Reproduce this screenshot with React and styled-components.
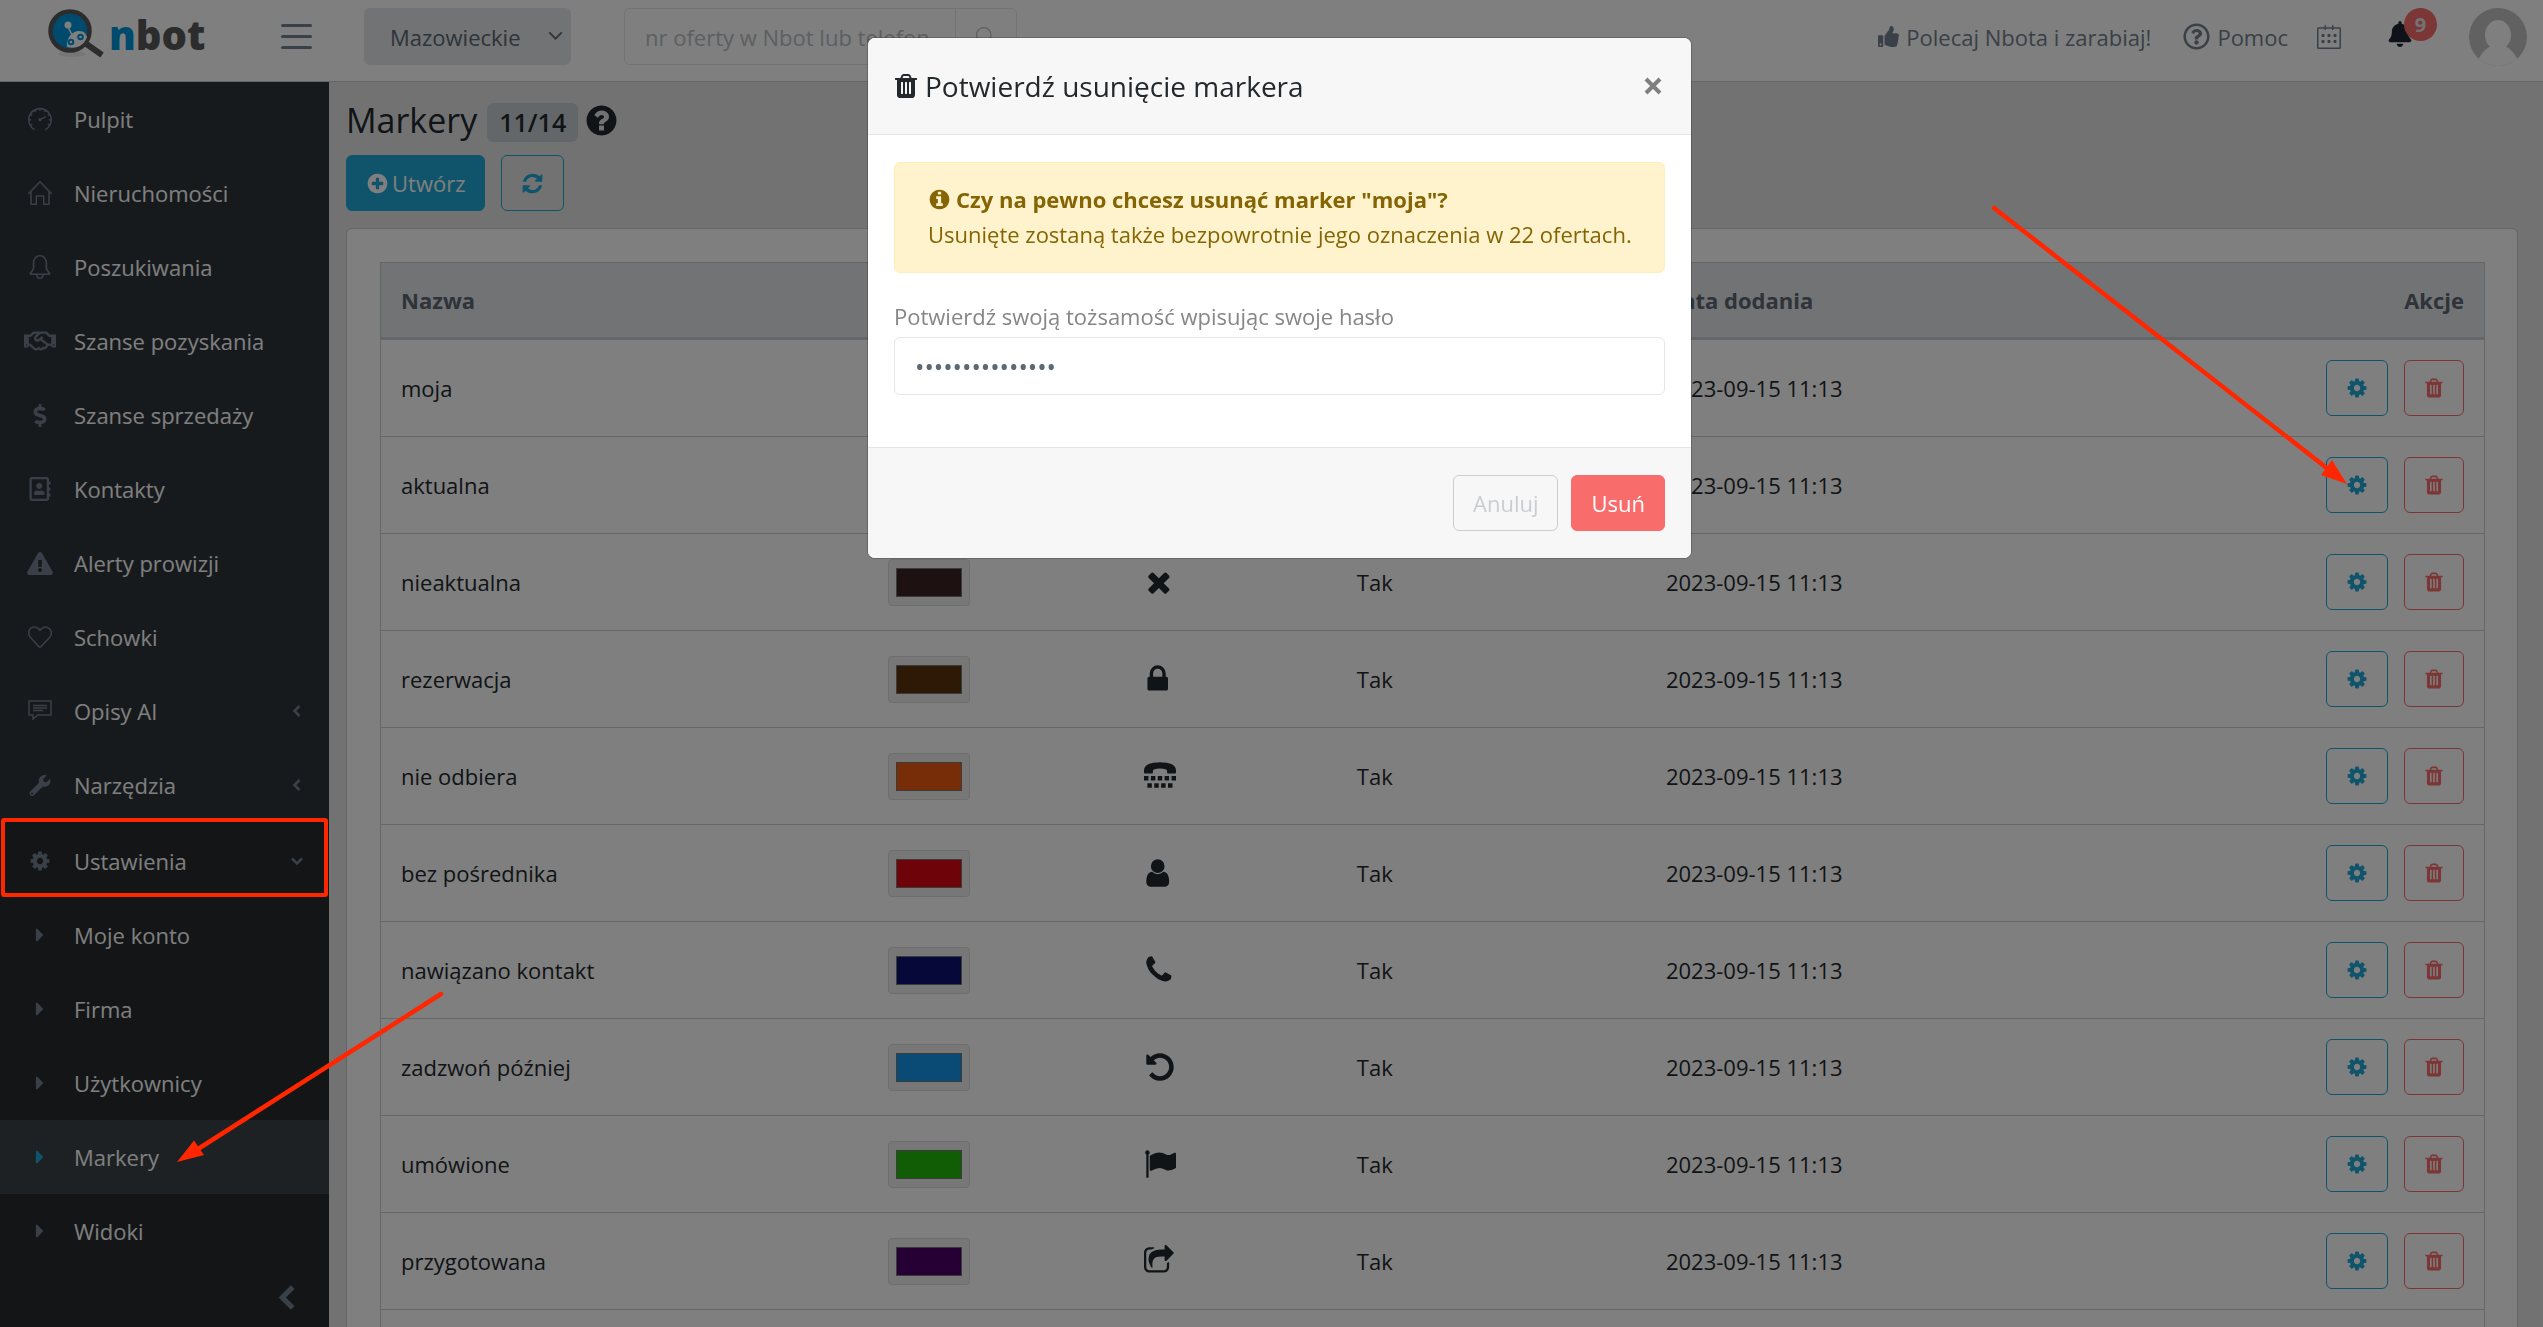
import React from "react";
import styled, { createGlobalStyle } from "styled-components";
import { SlSpeedometer, SlHome, SlBell, SlCalender, SlHeart, SlMagnifier } from "react-icons/sl";
import {
  FaRegHandshake, FaDollarSign, FaRegAddressBook, FaExclamationTriangle, FaWrench,
  FaCaretRight, FaThumbsUp, FaRegQuestionCircle, FaBell,
} from "react-icons/fa";

const c = {
  ink: "#23282c", muted: "#5c6873", icon: "#73818f", line: "#c8ced3",
  blue: "#20a8d8", red: "#f86c6b", side: "#2f353a", mark: "#ff2600",
};

const Global = createGlobalStyle`
  *, *::before, *::after { box-sizing: border-box; }
  body { margin: 0; background: #e4e5e6; color: ${c.ink}; }
  body, button, input, select { font-family: "Open Sans", "Noto Sans", sans-serif; font-size: 22px; line-height: 34px; }
  a { color: inherit; text-decoration: none; }
  h1, h2, p { margin: 0; font-weight: 400; }
`;

/* ---------- icons ---------- */
const CIRCLE = "M1664 896q0 209-103 385.5t-279.5 279.5-385.5 103-385.5-103-279.5-279.5-103-385.5 103-385.5 279.5-279.5 385.5-103 385.5 103 279.5 279.5 103 385.5z";
const PATHS = {
  cog: "M1152 896q0-106-75-181t-181-75-181 75-75 181 75 181 181 75 181-75 75-181zm512-109v222q0 12-8 23t-20 13l-185 28q-19 54-39 91 35 50 107 138 10 12 10 25t-9 23q-27 37-99 108t-94 71q-12 0-26-9l-138-108q-44 23-91 38-16 136-29 186-7 28-36 28h-222q-14 0-24.5-8.5t-11.5-21.5l-28-184q-49-16-90-37l-141 107q-10 9-25 9-14 0-25-11-126-114-165-168-7-10-7-23 0-12 8-23 15-21 51-66.5t54-70.5q-27-50-41-99l-183-27q-13-2-21-12.5t-8-23.5v-222q0-12 8-23t19-13l186-28q14-46 39-92-40-57-107-138-10-12-10-24 0-10 9-23 26-36 98.5-107.5t94.5-71.5q13 0 26 10l138 107q44-23 91-38 16-136 29-186 7-28 36-28h222q14 0 24.5 8.5t11.5 21.5l28 184q49 16 90 37l142-107q9-9 24-9 13 0 25 10 129 119 165 170 7 8 7 22 0 12-8 23-15 21-51 66.5t-54 70.5q26 50 41 98l183 28q13 2 21 12.5t8 23.5z",
  trash: "M704 1376v-704q0-14-9-23t-23-9h-64q-14 0-23 9t-9 23v704q0 14 9 23t23 9h64q14 0 23-9t9-23zm256 0v-704q0-14-9-23t-23-9h-64q-14 0-23 9t-9 23v704q0 14 9 23t23 9h64q14 0 23-9t9-23zm256 0v-704q0-14-9-23t-23-9h-64q-14 0-23 9t-9 23v704q0 14 9 23t23 9h64q14 0 23-9t9-23zm-544-992h448l-48-117q-7-9-17-11h-317q-10 2-17 11zm928 32v64q0 14-9 23t-23 9h-96v948q0 83-47 143.5t-113 60.5h-832q-66 0-113-58.5t-47-141.5v-952h-96q-14 0-23-9t-9-23v-64q0-14 9-23t23-9h309l70-167q15-37 54-63t79-26h320q40 0 79 26t54 63l70 167h309q14 0 23 9t9 23z",
  refresh: "M1639 1056q0 5-1 7-64 268-268 434.5t-478 166.5q-146 0-282.5-55t-243.5-157l-129 129q-19 19-45 19t-45-19-19-45v-448q0-26 19-45t45-19h448q26 0 45 19t19 45-19 45l-137 137q71 66 161 102t187 36q134 0 250-65t186-179q11-17 53-117 8-23 30-23h192q13 0 22.5 9.5t9.5 22.5zm25-800v448q0 26-19 45t-45 19h-448q-26 0-45-19t-19-45 19-45l138-138q-148-137-349-137-134 0-250 65t-186 179q-11 17-53 117-8 23-30 23h-199q-13 0-22.5-9.5t-9.5-22.5v-7q65-268 270-434.5t480-166.5q146 0 284 55.5t245 156.5l130-129q19-19 45-19t45 19 19 45z",
  plus: "M1344 960v-128q0-26-19-45t-45-19h-256v-256q0-26-19-45t-45-19h-128q-26 0-45 19t-19 45v256h-256q-26 0-45 19t-19 45v128q0 26 19 45t45 19h256v256q0 26 19 45t45 19h128q26 0 45-19t19-45v-256h256q26 0 45-19t19-45z" + CIRCLE,
  question: "M1024 1376v-192q0-14-9-23t-23-9h-192q-14 0-23 9t-9 23v192q0 14 9 23t23 9h192q14 0 23-9t9-23zm256-672q0-88-55.5-163t-138.5-116-170-41q-243 0-371 213-15 24 8 42l132 100q7 6 19 6 16 0 25-12 53-68 86-92 34-24 86-24 48 0 85.5 26t37.5 59q0 38-20 61t-68 45q-63 28-115.5 86.5t-52.5 125.5v36q0 14 9 23t23 9h192q14 0 23-9t9-23q0-19 21.5-49.5t54.5-49.5q32-18 49-28.5t46-35 44.5-48 28-60.5 12.5-81z" + CIRCLE,
  info: "M1152 1376v-160q0-14-9-23t-23-9h-96v-512q0-14-9-23t-23-9h-320q-14 0-23 9t-9 23v160q0 14 9 23t23 9h96v320h-96q-14 0-23 9t-9 23v160q0 14 9 23t23 9h448q14 0 23-9t9-23zm-128-896v-160q0-14-9-23t-23-9h-192q-14 0-23 9t-9 23v160q0 14 9 23t23 9h192q14 0 23-9t9-23z" + CIRCLE,
  times: "M1426 1322q0 40-28 68l-136 136q-28 28-68 28t-68-28l-294-294-294 294q-28 28-68 28t-68-28l-136-136q-28-28-28-68t28-68l294-294-294-294q-28-28-28-68t28-68l136-136q28-28 68-28t68 28l294 294 294-294q28-28 68-28t68 28l136 136q28 28 28 68t-28 68l-294 294 294 294q28 28 28 68z",
  lock: "M512 768h512v-192q0-106-75-181t-181-75-181 75-75 181v192zm832 96v576q0 40-28 68t-68 28h-960q-40 0-68-28t-28-68v-576q0-40 28-68t68-28h32v-192q0-184 132-316t316-132 316 132 132 316v192h32q40 0 68 28t28 68z",
  user: "M1408 1399q0 109-62.5 187t-150.5 78h-854q-88 0-150.5-78t-62.5-187q0-85 8.5-160.5t31.5-152 58.5-131 94-89 134.5-34.5q131 128 313 128t313-128q76 0 134.5 34.5t94 89 58.5 131 31.5 152 8.5 160.5zm-256-887q0 159-112.5 271.5t-271.5 112.5-271.5-112.5-112.5-271.5 112.5-271.5 271.5-112.5 271.5 112.5 112.5 271.5z",
  phone: "M1536 1240q0 27-10 70.5t-21 68.5q-21 50-122 106-94 51-186 51-27 0-52.5-3.5t-57.5-12.5-47.5-14.5-55.5-20.5-49-18q-98-35-175-83-128-79-264.5-215.5t-215.5-264.5q-48-77-83-175-3-9-18-49t-20.5-55.5-14.5-47.5-12.5-57.5-3.5-52.5q0-92 51-186 56-101 106-122 25-11 68.5-21t70.5-10q14 0 21 3 18 6 53 76 11 19 30 54t35 63.5 31 53.5q3 4 17.5 25t21.5 35.5 7 28.5q0 20-28.5 50t-62 55-62 53-28.5 46q0 9 5 22.5t8.5 20.5 14 24 11.5 19q76 137 174 235t235 174q2 1 19 11.5t24 14 20.5 8.5 22.5 5q18 0 46-28.5t53-62 55-62 50-28.5q14 0 28.5 7t35.5 21.5 25 17.5q25 15 53.5 31t63.5 35 54 30q70 35 76 53 3 7 3 21z",
  undo: "M1664 896q0 156-61 298t-164 245-245 164-298 61q-172 0-327-72.5t-264-204.5q-7-10-6.5-22.5t8.5-20.5l137-138q10-9 25-9 16 2 23 12 73 95 179 147t225 52q104 0 198.5-40.5t163.5-109.5 109.5-163.5 40.5-198.5-40.5-198.5-109.5-163.5-163.5-109.5-198.5-40.5q-98 0-188 35.5t-160 101.5l137 138q31 30 14 69-17 40-59 40h-448q-26 0-45-19t-19-45v-448q0-42 40-59 39-17 69 14l130 129q107-101 244.5-156.5t284.5-55.5q156 0 298 61t245 164 164 245 61 298z",
  flag: "M320 256q0 72-64 110v1266q0 13-9.5 22.5t-22.5 9.5h-64q-13 0-22.5-9.5t-9.5-22.5v-1266q-64-38-64-110 0-53 37.5-90.5t90.5-37.5 90.5 37.5 37.5 90.5zm1472 64v763q0 25-12.5 38.5t-39.5 27.5q-215 116-369 116-61 0-123.5-22t-108.5-48-115.5-48-142.5-22q-192 0-464 146-17 9-33 9-26 0-45-19t-19-45v-742q0-32 31-55 21-14 79-43 236-120 421-120 107 0 200 29t219 88q38 19 88 19 54 0 117.5-21t110-47 88-47 54.5-21q26 0 45 19t19 45z",
  share: "M1408 989v259q0 119-84.5 203.5t-203.5 84.5h-832q-119 0-203.5-84.5t-84.5-203.5v-832q0-119 84.5-203.5t203.5-84.5h255q13 0 22.5 9.5t9.5 22.5q0 27-26 32-77 26-133 60-10 4-16 4h-112q-66 0-113 47t-47 113v832q0 66 47 113t113 47h832q66 0 113-47t47-113v-214q0-19 18-29 28-13 54-37 16-16 35-8 21 9 21 29zm237-496l-384 384q-18 19-45 19-12 0-25-5-39-17-39-59v-192h-160q-323 0-438 131-119 137-74 473 3 23-20 34-8 2-12 2-16 0-26-13-10-14-21-31t-39.5-68.5-49.5-99.5-38.5-114-17.5-122q0-49 3.5-91t14-90 28-88 47-81.5 68.5-74 94.5-61.5 124.5-48.5 159.5-30.5 196.5-11h160v-192q0-42 39-59 13-5 25-5 26 0 45 19l384 384q19 19 19 45t-19 45z",
  tty: "M0 576Q20 128 896 128T1792 576V700Q1792 752 1740 752H1344Q1290 752 1290 700V560Q896 400 502 560V700Q502 752 448 752H52Q0 752 0 700ZM0 900h250v250H0zM385 900h250v250H385zM770 900h250v250H770zM1155 900h250v250H1155zM1542 900h250v250H1542zM190 1300h250v250H190zM575 1300h250v250H575zM960 1300h250v250H960zM1345 1300h250v250H1345z",
};
const Glyph = ({ name, size = 22 }) => (
  <svg width={size} height={size} viewBox="0 0 1792 1792" fill="currentColor" aria-hidden="true">
    <path fillRule={name === "tty" ? "nonzero" : "evenodd"} d={PATHS[name]} />
  </svg>
);
const Chevron = ({ size, down, weight = 3 }) => (
  <svg width={size} height={size} viewBox="0 0 12 12" fill="none" stroke="currentColor" strokeWidth={weight} aria-hidden="true">
    <path d={down ? "M1 3.5l5 5 5-5" : "M8.5 1l-5 5 5 5"} />
  </svg>
);
const Comment = () => (
  <svg width="24" height="24" viewBox="0 0 24 24" fill="none" stroke="currentColor" strokeWidth="1.5" aria-hidden="true">
    <path d="M1 2h22v14H10l-5 4v-4H1zM5 6.5h14M5 9h14M5 11.5h10" />
  </svg>
);
const LogoMark = () => (
  <svg width="58" height="52" viewBox="0 -1 58 52" aria-hidden="true">
    <ellipse cx="24" cy="44" rx="14" ry="3" fill="#000" opacity=".07" />
    <path d="M37 33l17 12" stroke="#58595b" strokeWidth="6" />
    <circle cx="22" cy="21" r="19.5" fill="#0095da" stroke="#58595b" strokeWidth="4.5" />
    <path d="M19 37C18 27 25 21 31 21C36 21 38 24 39 27C37 34 29 40 19 37Z" fill="#fff" />
    <circle cx="20" cy="15" r="3.5" fill="#fff" />
    <path d="M20 17l4 8" stroke="#fff" strokeWidth="1.5" />
    <circle cx="23" cy="32" r="2.3" fill="none" stroke="#0095da" strokeWidth="2" />
    <circle cx="32.5" cy="27" r="2.3" fill="none" stroke="#0095da" strokeWidth="2" />
  </svg>
);

/* ---------- top bar ---------- */
const Shell = styled.div`height: 100vh; display: flex; flex-direction: column; overflow: hidden;`;
const Header = styled.header`
  flex: none; height: 82px; padding: 8px 16px 8px 48px; background: #fff; border-bottom: 1px solid ${c.line};
  display: flex; align-items: flex-start; color: ${c.icon};
`;
const Brand = styled.a`
  width: 233px; height: 54px; display: flex; align-items: center; gap: 3px; font-size: 40px; line-height: 50px; font-weight: 800; color: #58595b;
  svg { flex: none; }
  span { color: #0095da; }
`;
const BarButton = styled.button`
  width: 31px; height: 56px; margin-right: 52px; padding: 0; border: 0; background: none;
  display: flex; flex-direction: column; justify-content: center; gap: 8px;
  i { height: 3px; border-radius: 2px; background: ${c.icon}; }
`;
const RegionWrap = styled.div`
  position: relative; color: ${c.muted};
  svg { position: absolute; right: 8px; top: 20px; pointer-events: none; }
`;
const RegionSelect = styled.select`
  width: 207px; height: 57px; padding: 0 26px; border: 0; border-radius: 6px; background: #e4e7ea; color: ${c.muted}; appearance: none;
`;
const Search = styled.form`
  margin-left: 53px; display: flex; height: 57px; border: 1px solid #e4e7ea; border-radius: 6px;
`;
const SearchInput = styled.input`
  width: 330px; padding: 0 20px; border: 0; background: none; color: ${c.muted};
  &::placeholder { color: #b9bec3; opacity: 1; }
`;
const SearchButton = styled.button`
  width: 61px; border: 0; border-left: 1px solid #e4e7ea; background: none; color: #b9bec3; padding: 0;
  svg { display: block; margin: auto; }
`;
const Tools = styled.nav`
  margin-left: auto; display: flex; align-items: center; height: 57px; color: ${c.icon};
`;
const ToolLink = styled.a`
  display: flex; align-items: center; gap: 7px; margin-right: ${p => p.$gap}px;
`;
const Alerts = styled.button`
  position: relative; width: 26px; height: 26px; margin: 0 56px 6px 0; padding: 0; border: 0; background: none; color: #212433;
`;
const Count = styled.span`
  position: absolute; left: 17px; top: -13px; width: 33px; height: 33px; border-radius: 50%;
  background: ${c.red}; color: #e4e7ea; font-size: 20px; line-height: 33px; font-weight: 700; text-align: center;
`;
const Avatar = styled.svg`display: block; border-radius: 50%;`;

/* ---------- sidebar ---------- */
const Body = styled.div`flex: 1; min-height: 0; display: flex;`;
const Sidebar = styled.aside`
  flex: none; width: 329px; background: ${c.side}; color: #fff; display: flex; flex-direction: column;
`;
const NavItem = styled.a`
  height: 74px; padding: 0 26px 0 24px; display: flex; align-items: center; gap: 18px;
  background: ${p => (p.$active ? "#3a4248" : "transparent")};
  > svg { flex: none; width: 32px; color: ${p => (p.$active ? c.blue : c.icon)}; }
  > svg:last-child { width: 12px; margin-left: auto; }
`;
const NavGroup = styled.div`
  flex: 1; display: flex; flex-direction: column; padding-top: 2px; background: #262a2e;
`;
const Minimize = styled.button`
  flex: 1; border: 0; background: none; color: ${c.icon}; padding: 0 29px; display: flex; justify-content: flex-end; align-items: center;
`;

/* ---------- content ---------- */
const Main = styled.main`flex: 1; min-width: 0; padding: 16px 25px 0 17px;`;
const TitleRow = styled.div`display: flex; align-items: center; gap: 6px; height: 44px;`;
const Title = styled.h1`font-size: 34px; line-height: 44px; margin-right: 4px;`;
const Badge = styled.span`
  height: 39px; padding: 0 12px; border-radius: 6px; background: ${c.line}; font-size: 25px; line-height: 39px; font-weight: 600; margin-top: 4px;
`;
const Actions = styled.div`display: flex; gap: 16px; margin: 13px 0 17px;`;
const Button = styled.button`
  height: 56px; padding: 0 ${p => p.$pad || 19}px; border: 1px solid ${p => p.$tone}; border-radius: 6px;
  display: inline-flex; align-items: center; justify-content: center; gap: 3px;
  background: ${p => (p.$solid ? p.$tone : "transparent")}; color: ${p => (p.$solid ? "#fff" : p.$tone)};
`;
const Card = styled.section`padding: 33px 32px 33px 33px; background: #fff; border: 1px solid ${c.line}; border-radius: 6px;`;
const Table = styled.table`
  width: 100%; table-layout: fixed; border-collapse: separate; border-spacing: 0; border: 1px solid ${c.line};
`;
const Th = styled.th`
  height: 77px; padding: 0 20px; text-align: ${p => (p.$right ? "right" : "left")}; font-weight: 700; color: ${c.muted};
  background: #e4e7ea; border-bottom: 3px solid ${c.line};
`;
const Td = styled.td`
  height: 97px; padding: 0 20px; border-bottom: 1px solid ${c.line}; vertical-align: middle;
  > svg { display: block; }
`;
const Swatch = styled.input`
  display: block; width: 82px; height: 47px; padding: 8px 7px; border: 1px solid #dcdcdc; border-radius: 4px; background: #efefef;
  &::-webkit-color-swatch-wrapper { padding: 0; }
  &::-webkit-color-swatch { border: 1px solid #767676; }
`;
const RowActions = styled.div`display: flex; justify-content: flex-end; gap: 16px;`;

/* ---------- dialog ---------- */
const Backdrop = styled.div`
  position: fixed; inset: 0; padding: 38px 0 0 16px; background: rgba(0, 0, 0, .5); display: flex; justify-content: center; align-items: flex-start;
`;
const Dialog = styled.section`
  width: 823px; border-radius: 7px; overflow: hidden; background: #fff; box-shadow: 0 0 0 1px rgba(0, 0, 0, .2);
`;
const DialogHead = styled.header`
  height: 97px; padding: 0 28px 0 24px; background: #f7f7f7; border-bottom: 1px solid #e4e5e6; display: flex; align-items: center; gap: 5px;
`;
const DialogTitle = styled.h2`font-size: 28px; line-height: 40px;`;
const Close = styled.button`
  margin-left: auto; padding: 0; border: 0; background: none; color: #7f7f7f; display: flex;
`;
const DialogBody = styled.div`padding: 27px 26px 52px;`;
const Alert = styled.div`
  height: 111px; padding: 19px 33px; background: #fff3cd; border: 1px solid #ffeeba; border-radius: 6px; color: #856404; line-height: 35px; white-space: nowrap;
  strong { display: flex; align-items: center; gap: 5px; }
`;
const FieldLabel = styled.label`display: block; margin: 26px 0 4px; color: #868686; line-height: 34px;`;
const Password = styled.input`
  display: block; width: 100%; height: 58px; padding: 0 20px; border: 1px solid #e4e7ea; border-radius: 6px; color: ${c.muted}; background: #fff; font-size: 25px;
`;
const DialogFoot = styled.footer`
  height: 111px; padding: 0 26px; background: #f7f7f7; border-top: 1px solid #e4e5e6; display: flex; align-items: center; justify-content: flex-end; gap: 13px;
`;
const Marks = styled.svg`position: fixed; left: 0; top: 0; pointer-events: none;`;

const NAV = [
  ["Pulpit", <SlSpeedometer size={24} />],
  ["Nieruchomości", <SlHome size={24} />],
  ["Poszukiwania", <SlBell size={24} />],
  ["Szanse pozyskania", <FaRegHandshake size={30} />],
  ["Szanse sprzedaży", <FaDollarSign size={23} />],
  ["Kontakty", <FaRegAddressBook size={24} />],
  ["Alerty prowizji", <FaExclamationTriangle size={23} />],
  ["Schowki", <SlHeart size={24} />],
  ["Opisy AI", <Comment />, true],
  ["Narzędzia", <FaWrench size={21} />, true],
];
const SUBNAV = ["Moje konto", "Firma", "Użytkownicy", "Markery", "Widoki"];
const ROWS = [
  ["moja"], ["aktualna"],
  ["nieaktualna", "#3c2324", "times"],
  ["rezerwacja", "#5b320b", "lock"],
  ["nie odbiera", "#f05a13", "tty"],
  ["bez pośrednika", "#df0714", "user"],
  ["nawiązano kontakt", "#0a1172", "phone"],
  ["zadzwoń później", "#1497ea", "undo"],
  ["umówione", "#23bb0a", "flag"],
  ["przygotowana", "#4d0068", "share"],
  [""],
];

export default function App() {
  return (
    <Shell>
      <Global />
      <Header>
        <Brand href="#" aria-label="nbot"><LogoMark /><div><span>n</span>bot</div></Brand>
        <BarButton aria-label="Menu"><i /><i /><i /></BarButton>
        <RegionWrap>
          <RegionSelect aria-label="Województwo"><option>Mazowieckie</option></RegionSelect>
          <Chevron size={15} down weight={1.5} />
        </RegionWrap>
        <Search>
          <SearchInput aria-label="Szukaj" placeholder="nr oferty w Nbot lub telefon" />
          <SearchButton type="button" aria-label="Szukaj"><SlMagnifier size={20} /></SearchButton>
        </Search>
        <Tools>
          <ToolLink href="#" $gap={32}><FaThumbsUp size={21} />Polecaj Nbota i zarabiaj!</ToolLink>
          <ToolLink href="#" $gap={29}><FaRegQuestionCircle size={27} />Pomoc</ToolLink>
          <ToolLink href="#" $gap={46} aria-label="Kalendarz"><SlCalender size={24} /></ToolLink>
          <Alerts aria-label="Powiadomienia"><FaBell size={26} /><Count>9</Count></Alerts>
          <Avatar width="58" height="58" viewBox="0 0 58 58" role="img" aria-label="Profil">
            <rect width="58" height="58" fill="#c2c2c2" />
            <ellipse cx="29" cy="27" rx="13" ry="15" fill="#fff" />
            <path d="M7 58Q12 41 25 37h8Q46 41 51 58z" fill="#fff" />
          </Avatar>
        </Tools>
      </Header>
      <Body>
        <Sidebar>
          {NAV.map(([label, icon, more]) => (
            <NavItem href="#" key={label}>{icon}<span>{label}</span>{more && <Chevron size={12} weight={2.5} />}</NavItem>
          ))}
          <NavGroup>
            <NavItem href="#"><Glyph name="cog" /><span>Ustawienia</span><Chevron size={12} down weight={2.5} /></NavItem>
            {SUBNAV.map(label => (
              <NavItem href="#" key={label} $active={label === "Markery"}><FaCaretRight size={22} /><span>{label}</span></NavItem>
            ))}
            <Minimize aria-label="Zwiń menu"><Chevron size={25} weight={2.5} /></Minimize>
          </NavGroup>
        </Sidebar>
        <Main>
          <TitleRow><Title>Markery</Title><Badge>11/14</Badge><Glyph name="question" size={35} /></TitleRow>
          <Actions>
            <Button $tone={c.blue} $solid><Glyph name="plus" size={23} />Utwórz</Button>
            <Button $tone={c.blue} aria-label="Odśwież"><Glyph name="refresh" size={23} /></Button>
          </Actions>
          <Card>
            <Table>
              <colgroup>
                <col style={{ width: "23.15%" }} /><col style={{ width: "12.2%" }} /><col style={{ width: "10.1%" }} />
                <col style={{ width: "14.7%" }} /><col style={{ width: "20%" }} /><col />
              </colgroup>
              <thead>
                <tr><Th>Nazwa</Th><Th /><Th /><Th /><Th>Data dodania</Th><Th $right>Akcje</Th></tr>
              </thead>
              <tbody>
                {ROWS.map(([name, color, icon], i) => (
                  <tr key={i}>
                    <Td>{name}</Td>
                    <Td>{color && <Swatch type="color" disabled defaultValue={color} aria-label={"Kolor " + name} />}</Td>
                    <Td>{icon && <Glyph name={icon} size={32} />}</Td>
                    <Td>{icon && "Tak"}</Td>
                    <Td>{name && "2023-09-15 11:13"}</Td>
                    <Td>{name && (
                      <RowActions>
                        <Button $tone={c.blue} aria-label={"Edytuj " + name}><Glyph name="cog" /></Button>
                        <Button $tone={c.red} $pad={18} aria-label={"Usuń " + name}><Glyph name="trash" /></Button>
                      </RowActions>
                    )}</Td>
                  </tr>
                ))}
              </tbody>
            </Table>
          </Card>
        </Main>
      </Body>
      <Backdrop>
        <Dialog role="dialog" aria-modal="true" aria-labelledby="dialog-title">
          <DialogHead>
            <Glyph name="trash" size={28} />
            <DialogTitle id="dialog-title">Potwierdź usunięcie markera</DialogTitle>
            <Close aria-label="Zamknij">
              <svg width="20" height="20" viewBox="0 0 20 20" stroke="currentColor" strokeWidth="4"><path d="M3 3l14 14M17 3L3 17" /></svg>
            </Close>
          </DialogHead>
          <DialogBody>
            <Alert>
              <strong><Glyph name="info" size={23} />Czy na pewno chcesz usunąć marker "moja"?</strong>
              <p>Usunięte zostaną także bezpowrotnie jego oznaczenia w 22 ofertach.</p>
            </Alert>
            <FieldLabel htmlFor="password">Potwierdź swoją tożsamość wpisując swoje hasło</FieldLabel>
            <Password id="password" type="password" defaultValue="123456789012345" />
          </DialogBody>
          <DialogFoot>
            <Button $tone={c.line}>Anuluj</Button>
            <Button $tone={c.red} $solid>Usuń</Button>
          </DialogFoot>
        </Dialog>
      </Backdrop>
      <Marks width="2543" height="1327" viewBox="0 0 2543 1327" aria-hidden="true">
        <rect x="3" y="820" width="323" height="75" rx="1" fill="none" stroke={c.mark} strokeWidth="4" />
        <g stroke={c.mark} strokeWidth="4.5" strokeLinecap="round">
          <path d="M441 994L198 1149" /><path d="M1994 208L2328 469" />
        </g>
        <path fill={c.mark} d="M177 1162L194 1140.5L204 1155ZM2347 484L2332 460L2321 475Z" />
      </Marks>
    </Shell>
  );
}
